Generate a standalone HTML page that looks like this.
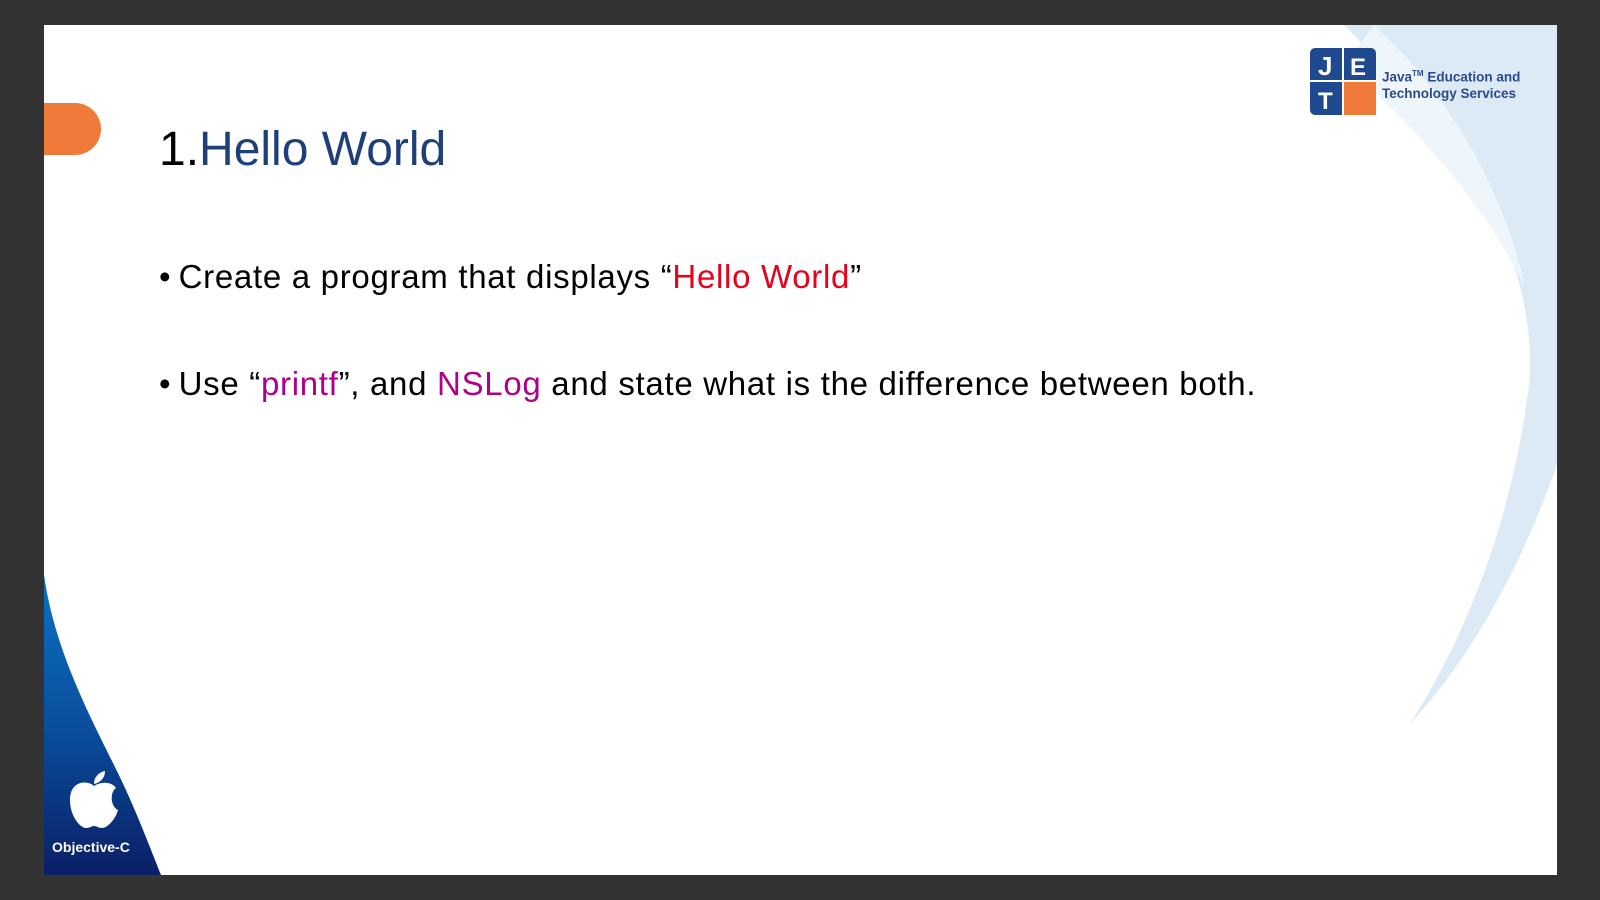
<!DOCTYPE html>
<html><head><meta charset="utf-8"><style>
body{margin:0;width:1600px;height:900px;background:#333;position:relative;overflow:hidden;font-family:"Liberation Sans",sans-serif}
#s{position:absolute;left:44px;top:25px;width:1513px;height:850px;background:#fff;overflow:hidden}
.t{position:absolute;white-space:nowrap}
</style></head><body>
<div id="s">
<svg width="1513" height="850" style="position:absolute;left:0;top:0">
<defs><linearGradient id="g" x1="0" y1="0" x2="0" y2="1"><stop offset="0" stop-color="#0a72c0"/><stop offset="0.5" stop-color="#0a4f9e"/><stop offset="1" stop-color="#0b1f66"/></linearGradient></defs>
<path d="M1300 0 L1513 0 L1513 440 C1470 560 1420 640 1365 700 C1430 600 1470 480 1485 360 C1495 230 1420 120 1300 0 Z" fill="#dbeaf5"/>
<path d="M1330 0 C1420 80 1470 200 1480 260 C1440 180 1380 110 1300 40 Z" fill="#eef5fb"/>
<path d="M0 550 C10 620 40 680 70 740 C90 780 105 820 117 850 L0 850 Z" fill="url(#g)"/>
<rect x="0" y="78" width="57" height="52" rx="26" fill="#f07a3a"/>
<rect x="0" y="78" width="26" height="52" fill="#f07a3a"/>
<g transform="translate(50,775)" fill="#fff">
<path d="M0,-14 C-6,-20 -24,-20 -24,0 C-24,16 -14,28 -8,28 C-4,28 -3,26 0,26 C3,26 4,28 8,28 C14,28 22,18 24,10 C16,6 16,-8 22,-12 C18,-18 8,-19 0,-14 Z"/>
<path d="M0,-16 C0,-24 6,-28 11,-29 C11,-21 5,-17 0,-16 Z"/>
</g>
<rect x="1266" y="23" width="66" height="67" rx="5" fill="#1f4a8f"/>
<rect x="1300" y="57" width="32" height="33" fill="#f07a3a"/>
<line x1="1299" y1="23" x2="1299" y2="90" stroke="#fff" stroke-width="2"/>
<line x1="1266" y1="56" x2="1332" y2="56" stroke="#fff" stroke-width="2"/>
<text x="1274" y="50" fill="#fff" font-size="26" font-weight="bold" font-family="Liberation Sans">J</text>
<text x="1306" y="50" fill="#fff" font-size="24" font-weight="bold" font-family="Liberation Sans">E</text>
<text x="1274" y="84" fill="#fff" font-size="24" font-weight="bold" font-family="Liberation Sans">T</text>
</svg>
<div class="t" style="left:1338px;top:41px;font-size:13.5px;font-weight:bold;color:#2a4a8a;line-height:16px">Java<sup style="font-size:8px">TM</sup> Education and<br>Technology Services</div>
<div class="t" style="left:8px;top:814px;font-size:14px;font-weight:bold;color:#fff">Objective-C</div>
<div class="t" style="left:115px;top:97px;font-size:48px;color:#1f3f7a"><span style="color:#000">1.</span>Hello World</div>
<div class="t" style="left:115px;top:233px;font-size:33px;color:#000;letter-spacing:0.7px">•<span style="font-size:24px"> </span>Create a program that displays “<span style="color:#e8001c">Hello World</span>”</div>
<div class="t" style="left:115px;top:340px;font-size:33px;color:#000;letter-spacing:0.7px">•<span style="font-size:24px"> </span>Use “<span style="color:#b0008a">printf</span>”, and <span style="color:#b0008a">NSLog</span> and state what is the difference between both.</div>
</div>
</body></html>
